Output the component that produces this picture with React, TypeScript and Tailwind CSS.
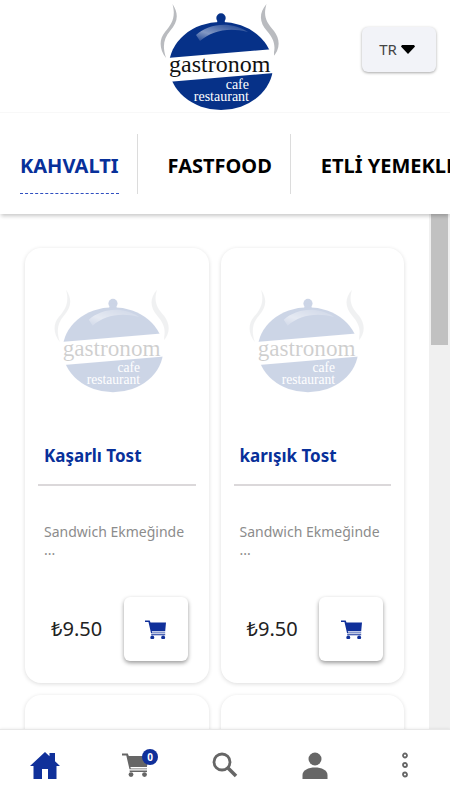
import { useState } from "react";
import clsx from "clsx";

interface Product {
  id: number;
  name: string;
  description: string;
  price: string;
}

const CATEGORIES = ["KAHVALTI", "FASTFOOD", "ETLİ YEMEKLER"];

const PRODUCTS: Product[] = [
  { id: 1, name: "Kaşarlı Tost", description: "Sandwich Ekmeğinde ...", price: "₺9.50" },
  { id: 2, name: "karışık Tost", description: "Sandwich Ekmeğinde ...", price: "₺9.50" },
  { id: 3, name: "Sucuklu Tost", description: "Sandwich Ekmeğinde ...", price: "₺9.50" },
  { id: 4, name: "Ayvalık Tost", description: "Sandwich Ekmeğinde ...", price: "₺9.50" },
];

function Logo({ id, className }: { id: string; className?: string }) {
  return (
    <svg viewBox="10 0 120 112" className={className} role="img" aria-label="gastronom cafe restaurant">
      <defs>
        <linearGradient id={id} x1="0" y1="1" x2="1" y2="0">
          <stop offset="0" stopColor="#fff" stopOpacity="0.1" />
          <stop offset="0.35" stopColor="#fff" stopOpacity="0.5" />
          <stop offset="1" stopColor="#fff" stopOpacity="0.05" />
        </linearGradient>
      </defs>
      <path d="M22.5 4C29 14 28 22 20 31C14 38 12 46 16 58C9 49 9 39 15 32C22 24 26 17 22.5 4Z" fill="#b9bbbf" />
      <path d="M116.500 4C108 14 110 23 117 31C124 39 127 47 122 58C131 49 130 39 124 31C116 22 113 16 116.500 4Z" fill="#b9bbbf" />
      <circle cx="71" cy="18" r="4.700" fill="#063188" />
      <path d="M68 18h6l1 5h-8z" fill="#063188" />
      <ellipse cx="71" cy="66" rx="52" ry="44" fill="#063188" />
      <path d="M46 35C58 24 80 20 98 32C78 27 62 31 50 41Z" fill={`url(#${id})`} />
      <path d="M17 58L124 49V73L17 82Z" fill="#fff" />
      <g fontFamily="'Liberation Serif', serif">
        <text x="19" y="72" fontSize="24" fill="#111">gastronom</text>
        <g fontSize="14" fill="#fff" textAnchor="end">
          <text x="99" y="89">cafe</text>
          <text x="99" y="101">restaurant</text>
        </g>
      </g>
    </svg>
  );
}

function CartIcon({ className }: { className?: string }) {
  return (
    <svg viewBox="0 0 26 24" className={className} fill="currentColor" aria-hidden="true">
      <path d="M0 .5h5.800l1 2.500H26L25 14H8.400l.4 1.500H25v.8H7.500L4.300 2.500H0z" />
      <path d="M7.500 17.500H25v1.500H7.800z" />
      <circle cx="9" cy="21.600" r="2.400" />
      <circle cx="22.500" cy="21.600" r="2.400" />
    </svg>
  );
}

function HomeIcon() {
  return (
    <svg viewBox="0 0 30 27" className="w-[30px]" fill="currentColor" aria-hidden="true">
      <path d="M15 0l4.500 4.200V1H25v8.200l5 4.800h-3.500v13H18V17h-6v10H3.500V14H0z" />
    </svg>
  );
}

function SearchIcon() {
  return (
    <svg viewBox="0 0 26 26" className="w-[26px]" fill="none" stroke="currentColor" aria-hidden="true">
      <circle cx="10" cy="10" r="8" strokeWidth="2.800" />
      <path d="M15.500 15.500L24 24" strokeWidth="3.500" />
    </svg>
  );
}

function UserIcon() {
  return (
    <svg viewBox="0 0 26 27" className="w-[26px]" fill="currentColor" aria-hidden="true">
      <circle cx="13" cy="7" r="6.500" />
      <path d="M.5 27v-4c0-5 6-7.500 12.500-7.500S25.500 18 25.500 23v4z" />
    </svg>
  );
}

function MoreIcon() {
  return (
    <svg viewBox="0 0 8 26" className="w-2" fill="none" stroke="currentColor" strokeWidth="1.800" aria-hidden="true">
      <circle cx="4" cy="3.500" r="2" />
      <circle cx="4" cy="13" r="2" />
      <circle cx="4" cy="22.500" r="2" />
    </svg>
  );
}

function ProductCard({ product }: { product: Product }) {
  return (
    <article className="rounded-2xl bg-white px-[13px] pb-[22px] shadow-[0_1px_4px_rgba(0,0,0,0.14)]">
      <div className="flex justify-center pt-[38px] pr-[10px]">
        <Logo id={`shine-${product.id}`} className="w-[116px] opacity-20" />
      </div>
      <h2 className="mt-[50px] border-b-2 border-[#dbd8da] px-1.5 pb-4 text-[17px] leading-6 font-bold text-[#08309a]">
        {product.name}
      </h2>
      <p className="mt-[37px] h-[74px] px-1.5 text-sm leading-[18px] text-[#8c8c8c]">{product.description}</p>
      <div className="flex items-center justify-between pr-2 pl-[13px]">
        <span className="text-xl text-[#222]">{product.price}</span>
        <button
          type="button"
          aria-label={`${product.name} sepete ekle`}
          className="flex size-16 items-center justify-center rounded-md bg-white text-[#10309a] shadow-[0_2px_4px_rgba(0,0,0,0.4)]"
        >
          <CartIcon className="w-[21px]" />
        </button>
      </div>
    </article>
  );
}

export default function App() {
  const [category, setCategory] = useState(CATEGORIES[0]);
  const cartCount = 0;

  return (
    <div className="flex h-screen flex-col overflow-hidden bg-white font-['Noto_Sans','Open_Sans',sans-serif]">
      <header className="grid shrink-0 grid-cols-[1fr_auto_1fr] border-b border-[#f8f8f8] pr-[14px] pl-1">
        <Logo id="shine-header" className="col-start-2 w-[120px]" />
        <button
          type="button"
          className="mt-[27px] flex h-[45px] w-[74px] items-center justify-center gap-1 justify-self-end rounded-md bg-[#f2f3f8] pr-1 text-[15px] text-[#444] shadow-[0_1px_3px_rgba(0,0,0,0.35)]"
        >
          TR
          <svg viewBox="0 0 14 9" className="w-[14px]" aria-hidden="true">
            <path d="M1 0h12l1 1.500L7 9L0 1.500z" fill="#000" />
          </svg>
        </button>
      </header>

      <nav className="relative z-10 flex shrink-0 overflow-hidden bg-white pt-[21px] pb-5 pl-5 shadow-[0_3px_4px_-1px_rgba(0,0,0,0.22)]">
        {CATEGORIES.map((name) => (
          <div key={name} className="mr-[30px] shrink-0 border-r border-[#dcdcdc] pr-[18px]">
            <a
              href="#"
              onClick={() => setCategory(name)}
              className={clsx(
                "flex h-[60px] items-center border-b pt-1 text-xl font-bold whitespace-nowrap",
                name === category ? "border-dashed border-b-[#2f4fc0] text-[#08309a]" : "border-transparent text-black"
              )}
            >
              {name}
            </a>
          </div>
        ))}
      </nav>

      <main className="flex min-h-0 flex-1">
        <div className="grid flex-1 grid-cols-2 content-start gap-3 overflow-hidden px-[25px] pt-[34px]">
          {PRODUCTS.map((product) => (
            <ProductCard key={product.id} product={product} />
          ))}
        </div>
        <div className="w-[21px] bg-[#f0f0f0] px-0.5">
          <div className="h-[131px] bg-[#c1c1c1]" />
        </div>
      </main>

      <nav className="relative z-10 grid h-[71px] shrink-0 grid-cols-5 border-t border-[#e8e8e8] bg-white text-[#666] shadow-[0_0_3px_rgba(0,0,0,0.1)]">
        <a href="#" aria-label="Ana sayfa" className="flex items-center justify-center text-[#10309a]">
          <HomeIcon />
        </a>
        <a href="#" aria-label="Sepet" className="flex items-center justify-center">
          <span className="relative">
            <CartIcon className="w-[26px]" />
            <span className="absolute -top-1 -right-2.5 flex size-4 items-center justify-center rounded-full bg-[#10309a] text-[10px] font-bold text-white">
              {cartCount}
            </span>
          </span>
        </a>
        <button type="button" aria-label="Ara" className="flex items-center justify-center">
          <SearchIcon />
        </button>
        <a href="#" aria-label="Hesap" className="flex items-center justify-center">
          <UserIcon />
        </a>
        <button type="button" aria-label="Daha fazla" className="flex items-center justify-center">
          <MoreIcon />
        </button>
      </nav>
    </div>
  );
}
